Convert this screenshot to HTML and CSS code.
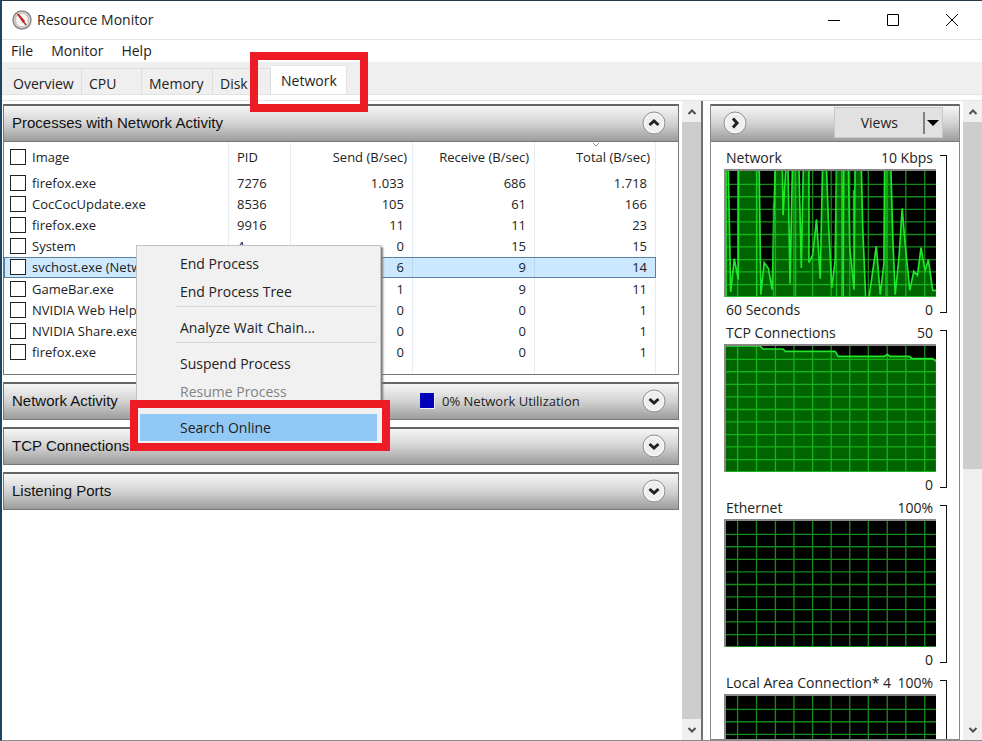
FILE: index.html
```html
<!DOCTYPE html>
<html lang="en">
<head>
<meta charset="utf-8">
<title>Resource Monitor</title>
<link rel="stylesheet" href="styles.css">
</head>
<body>
<svg class="defs" aria-hidden="true">
  <symbol id="grid" viewBox="75 93 633 377" preserveAspectRatio="none">
    <path class="grid-lines" d="M110 93V470M167 93V470M224 93V470M280 93V470M336 93V470M392 93V470M448 93V470M504 93V470M561 93V470M617 93V470M674 93V470M75 133H708M75 170H708M75 208H708M75 245H708M75 283H708M75 320H708M75 358H708M75 395H708M75 433H708M75 469H708"/>
  </symbol>
  <symbol id="chev-down" viewBox="0 0 24 24">
    <circle cx="12" cy="12" r="11" fill="#eee" stroke="#909090"/>
    <circle cx="12" cy="12" r="9.5" fill="none" stroke="#fafafa"/>
    <path d="M7.500 10L12 14L16.500 10" fill="none" stroke="#222" stroke-width="3"/>
  </symbol>
  <symbol id="arrow" viewBox="0 0 10 10">
    <path d="M1.500 7L5 3.500L8.500 7" fill="none" stroke="#505050" stroke-width="2"/>
  </symbol>
</svg>

<header class="titlebar">
  <svg class="logo" viewBox="0 0 20 20" aria-hidden="true">
    <circle cx="10" cy="10" r="9" fill="#e4e2e0" stroke="#8a8a8a" stroke-width="1.500"/>
    <circle cx="10" cy="10" r="7" fill="#faf6f3" stroke="#b9b4b0"/>
    <path d="M5 13A6 6 0 0 1 6 5M14 5A6 6 0 0 1 15 13" fill="none" stroke="#b5b0ac" stroke-dasharray="1 1"/>
    <path d="M4.500 3.500L7 4L13 11L11 13Z" fill="#c81e1e"/>
    <path d="M11 11L14 15" stroke="#a33" stroke-width="1.500"/>
  </svg>
  <h1>Resource Monitor</h1>
  <div class="window-buttons">
    <button aria-label="Minimize"><svg viewBox="0 0 14 14"><path d="M1 7.500H13"/></svg></button>
    <button aria-label="Maximize"><svg viewBox="0 0 14 14"><path d="M1.500 1.500H12.500V12.500H1.500Z"/></svg></button>
    <button aria-label="Close"><svg viewBox="0 0 14 14"><path d="M1 1L13 13M13 1L1 13"/></svg></button>
  </div>
</header>

<nav class="menubar">
  <button>File</button><button>Monitor</button><button>Help</button>
</nav>

<div class="tabs" role="tablist">
  <button role="tab" class="tab">Overview</button>
  <button role="tab" class="tab">CPU</button>
  <button role="tab" class="tab">Memory</button>
  <button role="tab" class="tab">Disk</button>
  <button role="tab" class="tab active" aria-selected="true">Network<span class="callout callout-tab"></span></button>
</div>

<main class="content">
  <section class="left">
    <div class="panels">
      <section class="panel">
        <div class="panel-head">
          <h2>Processes with Network Activity</h2>
          <button class="round up" aria-label="Collapse"><svg><use href="#chev-down"/></svg></button>
        </div>
        <div class="table-box">
          <table>
            <colgroup><col><col class="c-pid"><col class="c-num"><col class="c-num"><col class="c-num"></colgroup>
            <thead>
              <tr><th><label><input type="checkbox">Image</label></th><th>PID</th><th>Send (B/sec)</th><th>Receive (B/sec)</th><th>Total (B/sec)<svg class="sort" viewBox="0 0 8 4" aria-hidden="true"><path d="M1 0L4 3L7 0"/></svg></th></tr>
            </thead>
            <tbody>
              <tr><td><label><input type="checkbox">firefox.exe</label></td><td>7276</td><td>1.033</td><td>686</td><td>1.718</td></tr>
              <tr><td><label><input type="checkbox">CocCocUpdate.exe</label></td><td>8536</td><td>105</td><td>61</td><td>166</td></tr>
              <tr><td><label><input type="checkbox">firefox.exe</label></td><td>9916</td><td>11</td><td>11</td><td>23</td></tr>
              <tr><td><label><input type="checkbox">System</label></td><td>4</td><td>0</td><td>15</td><td>15</td></tr>
              <tr class="selected"><td><label><input type="checkbox">svchost.exe (Netw</label></td><td></td><td>6</td><td>9</td><td>14</td></tr>
              <tr><td><label><input type="checkbox">GameBar.exe</label></td><td></td><td>1</td><td>9</td><td>11</td></tr>
              <tr><td><label><input type="checkbox">NVIDIA Web Help</label></td><td></td><td>0</td><td>0</td><td>1</td></tr>
              <tr><td><label><input type="checkbox">NVIDIA Share.exe</label></td><td></td><td>0</td><td>0</td><td>1</td></tr>
              <tr><td><label><input type="checkbox">firefox.exe</label></td><td></td><td>0</td><td>0</td><td>1</td></tr>
            </tbody>
            <tfoot><tr><td></td><td></td><td></td><td></td><td></td></tr></tfoot>
          </table>
        </div>
      </section>
      <section class="panel">
        <div class="panel-head split">
          <h2>Network Activity</h2>
          <p class="usage"><span class="swatch"></span>0% Network Utilization</p>
          <button class="round" aria-label="Expand"><svg><use href="#chev-down"/></svg></button>
        </div>
      </section>
      <section class="panel">
        <div class="panel-head">
          <h2>TCP Connections</h2>
          <button class="round" aria-label="Expand"><svg><use href="#chev-down"/></svg></button>
        </div>
      </section>
      <section class="panel">
        <div class="panel-head">
          <h2>Listening Ports</h2>
          <button class="round" aria-label="Expand"><svg><use href="#chev-down"/></svg></button>
        </div>
      </section>
    </div>
    <div class="scroll">
      <button aria-label="Scroll up"><svg><use href="#arrow"/></svg></button>
      <div class="thumb full"></div>
      <button class="down" aria-label="Scroll down"><svg><use href="#arrow"/></svg></button>
    </div>
    <div class="menu" role="menu">
      <button role="menuitem">End Process</button>
      <button role="menuitem">End Process Tree</button>
      <hr>
      <button role="menuitem">Analyze Wait Chain...</button>
      <hr>
      <button role="menuitem">Suspend Process</button>
      <button role="menuitem" disabled>Resume Process</button>
      <hr>
      <button role="menuitem" class="hot">Search Online<span class="callout callout-item"></span></button>
    </div>
  </section>

  <aside class="right">
    <div class="graphs">
      <div class="panel-head">
        <button class="round next" aria-label="Hide graphs"><svg><use href="#chev-down"/></svg></button>
        <button class="views">Views<svg viewBox="0 0 18 24" aria-hidden="true"><path d="M1 1V23" stroke="#808080" stroke-width="2"/><path d="M4 9H16L10 15Z"/></svg></button>
      </div>
      <div class="graph">
        <div class="plot">
          <div class="row"><span>Network</span><span>10 Kbps</span></div>
          <svg class="chart" viewBox="75 93 633 377" preserveAspectRatio="none">
            <path class="area" d="M75 472V88H82L89 455L100 355L112 418L113 88H175L180 463L190 367L203 385L214 448L223 88H245L247 225L255 88H262L268 430L275 88H295L302 383L308 88H325V367L336 345L348 238L359 415L366 88H378L384 250L394 442L404 360L408 88H424L428 472L430 88H444L448 320L461 448L464 88H483L487 260L496 472H506L528 318L540 463L551 370L553 88H572L578 300L585 463L597 345L606 205L615 310L629 450L641 393L652 405L663 322L675 392L685 358L698 450H710V472Z"/>
            <path class="trace" d="M168 93V470M218 190V470M285 93V470M408 93V470M424 93V470M459 150V400M557 93V470"/>
            <use href="#grid" x="75" y="93" width="633" height="377"/>
          </svg>
          <div class="row foot"><span>60 Seconds</span><span>0</span></div>
        </div>
        <div class="bracket"></div>
      </div>
      <div class="graph">
        <div class="plot">
          <div class="row"><span>TCP Connections</span><span>50</span></div>
          <svg class="chart" viewBox="75 93 633 377" preserveAspectRatio="none">
            <path class="area" d="M72 475V93H178L186 102H247L254 109H404L413 124H553L561 118L569 124H628L636 131H698L710 140V475Z"/>
            <use href="#grid" x="75" y="93" width="633" height="377"/>
          </svg>
          <div class="row foot"><span></span><span>0</span></div>
        </div>
        <div class="bracket"></div>
      </div>
      <div class="graph">
        <div class="plot">
          <div class="row"><span>Ethernet</span><span>100%</span></div>
          <svg class="chart" viewBox="75 93 633 377" preserveAspectRatio="none"><use href="#grid" x="75" y="93" width="633" height="377"/></svg>
          <div class="row foot"><span></span><span>0</span></div>
        </div>
        <div class="bracket"></div>
      </div>
      <div class="graph">
        <div class="plot">
          <div class="row"><span>Local Area Connection* 4</span><span>100%</span></div>
          <svg class="chart" viewBox="75 93 633 377" preserveAspectRatio="none"><use href="#grid" x="75" y="93" width="633" height="377"/></svg>
        </div>
        <div class="bracket"></div>
      </div>
    </div>
    <div class="scroll">
      <button aria-label="Scroll up"><svg><use href="#arrow"/></svg></button>
      <div class="thumb"></div>
      <button class="down" aria-label="Scroll down"><svg><use href="#arrow"/></svg></button>
    </div>
  </aside>
</main>
</body>
</html>
```
FILE: styles.css
```css
* { box-sizing: border-box; }

body {
  margin: 0;
  height: 100vh;
  overflow: hidden;
  display: flex;
  flex-direction: column;
  border-top: 1px solid #2b3a44;
  border-left: 2px solid #1d4662;
  border-bottom: 1px solid #8c8c8c;
  background: #fff;
  color: #222;
  font: 14px/20px "Open Sans", "Noto Sans", sans-serif;
}

button {
  margin: 0;
  padding: 0;
  border: 0;
  background: none;
  color: inherit;
  font: inherit;
}

h1, h2, p { margin: 0; font-size: 14px; font-weight: 400; }

.defs { position: absolute; width: 0; height: 0; }

/* Title bar and menus */
.titlebar {
  flex: none;
  display: flex;
  align-items: center;
  height: 39px;
  padding: 0 1px 0 10px;
  border-bottom: 1px solid #e4e4e4;
}
.logo { width: 20px; height: 20px; margin-right: 5px; }
.window-buttons { display: flex; margin-left: auto; }
.window-buttons button { width: 59px; height: 36px; display: grid; place-items: center; }
.window-buttons svg { width: 14px; height: 14px; fill: none; stroke: #000; }

.menubar { flex: none; display: flex; gap: 18px; height: 22px; padding-left: 9px; }
.menubar button { line-height: 22px; }

.tabs {
  flex: none;
  display: grid;
  grid-template-columns: 75px 60px 71px 58px 76px;
  align-items: end;
  height: 33px;
  padding-left: 5px;
  background: #efefef;
  border-bottom: 1px solid #e2e2e2;
}
.tab {
  height: 26px;
  padding: 4px 0 0 7px;
  border: 1px solid #dedede;
  border-width: 1px 1px 0 0;
  text-align: left;
}
.tab:first-child { padding-left: 6px; }
.tab.active {
  position: relative;
  z-index: 3;
  height: 29px;
  padding: 2px 0 0 10px;
  background: #fff;
  border-color: #e4e4e4;
}
.callout { position: absolute; border: 8px solid #ed1c24; pointer-events: none; }
.callout-tab { inset: -14px -22px -18px -21px; }

/* Work area */
.content {
  flex: 1;
  min-height: 0;
  display: grid;
  grid-template-columns: 1fr 279px;
  margin-top: 5px;
  border-top: 1px solid #e4e4e4;
}
.left { position: relative; display: flex; min-height: 0; border-right: 2px solid #707070; }
.panels { flex: 1; display: flex; flex-direction: column; gap: 7px; padding: 3px 3px 0 1px; }

.panel-head {
  display: flex;
  align-items: center;
  height: 38px;
  padding: 0 12px 2px 8px;
  border: 1px solid #777;
  border-top: 2px solid #666;
  background: linear-gradient(#f6f6f6, #d2d2d2 50%, #9c9c9c);
}
.panel-head h2 { flex: 1; font: 15px/20px "Liberation Sans", Arial, sans-serif; color: #111; }
.split h2 { flex: 0 0 408px; }
.usage { flex: 1; display: flex; align-items: center; gap: 7px; font-size: 13px; }
.swatch { width: 15px; height: 16px; background: #0000b8; border: 1px solid #f0f0f0; border-width: 0 1px 1px 0; }
.round { flex: none; width: 24px; height: 24px; }
.round svg { display: block; width: 24px; height: 24px; }
.round.up { transform: rotate(180deg); }
.round.next { transform: rotate(-90deg); }

/* Process table */
.table-box { padding-right: 22px; border: 1px solid #777; border-top: 0; }
table { width: 100%; table-layout: fixed; border-collapse: collapse; font-size: 13px; line-height: 16px; }
.c-pid { width: 62px; }
.c-num { width: 122px; }
.c-num:last-child { width: 121px; }
th, td { padding: 0 8px; border-right: 1px solid #e6eef5; font-weight: 400; text-align: right; white-space: nowrap; }
th { position: relative; height: 30px; padding-right: 5px; padding-bottom: 1px; }
th:nth-child(-n+2), td:nth-child(-n+2) { text-align: left; }
th:first-child, td:first-child { padding-left: 6px; }
tbody { height: 191px; }
tbody td { height: 21px; }
tfoot td { height: 11px; }
td label, th label { display: flex; align-items: center; gap: 6px; }
input { appearance: none; flex: none; width: 16px; height: 16px; margin: 0; border: 1px solid #222; background: #fff; }
.selected { background: #cce8ff; outline: 1px solid #5b7f9c; outline-offset: -1px; }
.selected td { border-color: #b9d8f0; }
.sort { position: absolute; top: 1px; left: 57px; width: 8px; height: 4px; fill: none; stroke: #999; }

/* Context menu */
.menu {
  position: absolute;
  z-index: 2;
  left: 134px;
  top: 144px;
  width: 245px;
  padding: 4px 3px;
  background: #f1f1f1;
  border: 1px solid #c4c4c4;
  box-shadow: 2px 2px 2px #777;
}
.menu button { display: block; width: 100%; height: 28px; padding-left: 40px; text-align: left; }
.menu button:disabled { color: #838383; }
.menu hr { margin: 0 0 7px 36px; border: 0; border-top: 1px solid #d8d8d8; }
.menu .hot { position: relative; background: #92c8f5; }
.callout-item { inset: -14px -13px -9px -10px; box-shadow: inset 0 0 0 2px #f1f1f1; }

/* Scroll bars */
.scroll { flex: none; display: flex; flex-direction: column; width: 19px; min-height: 0; background: #efefef; }
.scroll button { flex: none; height: 21px; display: grid; place-items: center; }
.scroll button svg { width: 10px; height: 10px; }
.scroll .down { margin-top: auto; }
.scroll .down svg { transform: rotate(180deg); }
.thumb { flex: 0 0 347px; background: #cdcdcd; }
.thumb.full { flex: 1; }

/* Graph pane */
.right { display: flex; gap: 3px; min-height: 0; padding-left: 7px; }
.graphs { flex: 1; min-height: 0; margin-top: 3px; overflow: hidden; border: 1px solid #888; border-top: 0; }
.graphs .panel-head { justify-content: space-between; padding: 0 16px 2px 12px; border-width: 2px 0 1px; }
.views {
  display: flex;
  align-items: center;
  gap: 25px;
  height: 31px;
  padding: 0 1px 0 26px;
  background: #e1e1e1;
  border: 1px solid #c8c8c8;
}
.views svg { width: 18px; height: 24px; }
.graph { display: flex; gap: 4px; height: 175px; padding: 6px 0 0 13px; }
.plot { width: 212px; }
.row { display: flex; justify-content: space-between; height: 21px; padding: 0 3px 0 2px; white-space: nowrap; }
.row.foot { line-height: 26px; }
.chart {
  display: block;
  width: 100%;
  height: 128px;
  border: 2px solid #888;
  border-width: 2px 0 0 2px;
  background: #000;
}
.grid-lines { fill: none; stroke: rgba(35, 230, 45, .6); stroke-width: 4; }
.area { fill: #006400; stroke: #1fe62a; stroke-width: 5; }
.trace { fill: none; stroke: #16b81f; stroke-width: 4; }
.bracket { width: 7px; height: 158px; margin-top: 7px; border: 1px solid #111; border-left: 0; }
```
